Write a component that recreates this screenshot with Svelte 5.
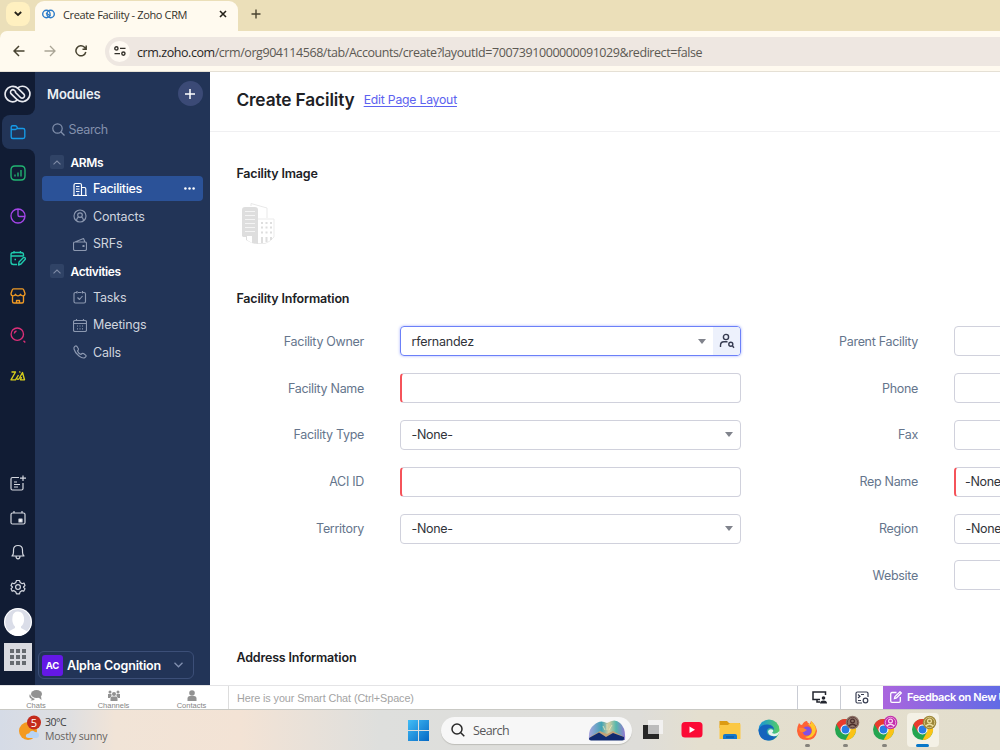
<script lang="ts">
  type Field = { label: string; value?: string; kind?: 'owner' | 'select'; required?: boolean };

  const leftFields: Field[] = [
    { label: 'Facility Owner', value: 'rfernandez', kind: 'owner' },
    { label: 'Facility Name', required: true },
    { label: 'Facility Type', value: '-None-', kind: 'select' },
    { label: 'ACI ID', required: true },
    { label: 'Territory', value: '-None-', kind: 'select' }
  ];

  const rightFields: Field[] = [
    { label: 'Parent Facility' },
    { label: 'Phone' },
    { label: 'Fax' },
    { label: 'Rep Name', value: '-None-', kind: 'select', required: true },
    { label: 'Region', value: '-None-', kind: 'select' },
    { label: 'Website' }
  ];

  const rail = [
    { name: 'Workspace', color: '#169be8', d: 'M1.2 13V3Q1.2 1.7 2.7 1.7H5.5Q6.5 1.7 7 3L7.5 4.5H13Q14.8 4.5 14.8 6.2V12.8Q14.8 14.5 13 14.5H2.8Q1.2 14.5 1.2 13ZM1.2 5.5H5.5L7.5 4.3' },
    { name: 'Reports', color: '#22b573', d: 'M5 1H11Q15 1 15 5V11Q15 15 11 15H5Q1 15 1 11V5Q1 1 5 1ZM5 11.5V9.5M8 11.5V7.5M11 11.5V5' },
    { name: 'Analytics', color: '#a445e8', d: 'M8 1A7 7 0 1 1 8 15A7 7 0 1 1 8 1M8 1V7Q8 8.5 9.5 8.5H15' },
    { name: 'Requests', color: '#1fcbae', d: 'M7 14.5H3.5Q1 14.5 1 12V4.5Q1 2.5 3.5 2.5H11Q13.5 2.5 13.5 4.5V6M1 6H13.5M4 1V3.5M10.5 1V3.5M4.5 9.5H6M8.5 15L9 12L13.5 7.5Q15 7 15.5 9L11 14Z' },
    { name: 'Marketplace', color: '#f09a24', d: 'M3.5 0.8H12.5Q13.5 0.8 13.8 2L15 5.5Q15 7.8 13 7.8Q11.5 7.8 10.5 6.3Q9.5 7.8 8 7.8T5.5 6.3Q4.5 7.8 3 7.8Q1 7.8 1 5.5L2.2 2Q2.5 0.8 3.5 0.8ZM2.5 8V13.5Q2.5 15 4 15H12Q13.5 15 13.5 13.5V8M6.5 15V12.5H9.5V15' },
    { name: 'Explore', color: '#de2f78', d: 'M7.3 1A6.2 6.2 0 1 1 7.3 13.4A6.2 6.2 0 1 1 7.3 1M4.3 6.5Q4.5 4.5 6.5 4M13.5 13.7L15.3 15.5' },
    { name: 'Zia', color: '#d9cf1c', d: 'M1.5 4H5.5L1 11.8H5.5L8.5 7M7 10.5Q8 12.5 9.5 10L12.5 4.5L14.5 11.8H10.5L11.5 9M9.5 4.5L10.2 3.5' }
  ];

  const tools = [
    { name: 'Notes', d: 'M9 2.5H2.5Q1 2.5 1 4V13.5Q1 15 2.5 15H11.5Q13 15 13 13.5V8M4 7H7M4 9.5H10M4 12H8M13 0.5V6M10 3.2H16' },
    { name: 'Calendar', d: 'M2.5 3H13.5Q15 3 15 4.5V12.5Q15 14 13.5 14H2.5Q1 14 1 12.5V4.5Q1 3 2.5 3ZM4 1V3M12 1V3' },
    { name: 'Notifications', d: 'M2 12Q3.5 11 3.5 8V6Q3.5 1.5 8 1.5T12.5 6V8Q12.5 11 14 12ZM6 12Q6 14.8 8 14.8T10 12' },
    { name: 'Settings', d: 'M6.5 1.5H9.5L10.2 3.5L12.2 4.7L14 4L15 6.5L13.5 8L15 9.8L13.7 12.2L11.8 11.7L10 13L9.5 14.8H6.5L5.8 13L4 11.7L2.2 12.2L1 9.8L2.5 8L1 6.5L2.2 4L4 4.7L5.8 3.5ZM8 5.7A2.4 2.4 0 1 1 8 10.5A2.4 2.4 0 1 1 8 5.7' }
  ];

  const groups = [
    {
      title: 'ARMs',
      items: [
        { label: 'Facilities', active: true, d: 'M1 13V3.5Q1 1.5 2.5 1.5H7Q8.5 1.5 8.5 3V13M0 13.5H14M8.5 5.5H11.5Q12.8 5.5 12.8 7V13.5M3 4.5H6.5M3 7H6.5M3 9.5H6.5M5 13V11.5' },
        { label: 'Contacts', d: 'M7 1A6 6 0 1 1 7 13A6 6 0 1 1 7 1M7 3.8A2.3 2.3 0 1 1 7 8.4A2.3 2.3 0 1 1 7 3.8M3.7 11.5V10.5Q4 9 5.5 8M10.3 11.5V10.5Q10 9 8.5 8' },
        { label: 'SRFs', d: 'M2 5H12Q13.5 5 13.5 6.5V12Q13.5 13.5 12 13.5H2Q0.5 13.5 0.5 12V6.5Q0.5 5 2 5ZM2 5L10.5 1.5L12 5M10 8.5H11V9.5H10Z' }
      ]
    },
    {
      title: 'Activities',
      items: [
        { label: 'Tasks', d: 'M4 2.5H2.5Q1 2.5 1 4V11.5Q1 13 2.5 13H11Q12.5 13 12.5 11.5V4Q12.5 2.5 11 2.5H9.5M5 2.5H8.5M4 1V3.5M9.5 1V3.5M4.5 7.5L6.5 9.5L9.5 6' },
        { label: 'Meetings', d: 'M2 2.5H12Q13.5 2.5 13.5 4V12Q13.5 13.5 12 13.5H2Q0.5 13.5 0.5 12V4Q0.5 2.5 2 2.5ZM0.5 5.5H13.5M3.5 1V3M10.5 1V3M4 8H5M6.5 8H7.5M9 8H10M4 10.8H5M6.5 10.8H7.5M9 10.8H10' },
        { label: 'Calls', d: 'M1 2.5Q2.5 0 4 1.5L5.5 4Q5.5 5 4.5 6Q5.5 8.5 8 9.5Q9 8 10.5 8.5L12.5 10Q14 11 12 12.5Q10 14 6 11Q2 8 1 4Z' }
      ]
    }
  ];

  const chromes = [
    { badge: '#8f7468', skin: '#4b2d2b' },
    { badge: '#c32bab', skin: '#f7d5f0' },
    { badge: '#9c8638', skin: '#eee0a0' }
  ];
</script>

{#snippet field(f: Field)}
  <div class="field-row">
    <span class="label">{f.label}</span>
    <div class="input" class:required={f.required} class:focused={f.kind === 'owner'}>
      <span class="value">{f.value ?? ''}</span>
      {#if f.kind}<i class="caret"></i>{/if}
      {#if f.kind === 'owner'}
        <span class="lookup">
          <svg width="16" height="16" viewBox="0 0 16 16" fill="none" stroke="#363b50" stroke-width="1.4"><circle cx="7" cy="4" r="2.6" /><path d="M1.5 14V12.5Q1.5 8.8 5 8.8H8.5M13.5 13L15 14.8" /><circle cx="11.8" cy="11.3" r="2" /></svg>
        </span>
      {/if}
    </div>
  </div>
{/snippet}

<div class="screen">
  <div class="tabs">
    <div class="tab-search"><svg width="10" height="8" viewBox="0 0 10 8" fill="none" stroke="#25221a" stroke-width="1.8"><path d="M1.8 2L5 5L8.2 2" /></svg></div>
    <div class="tab">
      <svg width="13" height="10" viewBox="0 0 13 10" fill="none" stroke="#2b7bc9" stroke-width="1.4"><circle cx="4.4" cy="5" r="3.7" /><circle cx="8.6" cy="5" r="3.7" /><path d="M4 4L8.5 7" /></svg>
      <span class="tab-title">Create Facility - Zoho CRM</span>
      <svg width="8" height="8" viewBox="0 0 8 8" stroke="#25221a" stroke-width="1.6"><path d="M1 1L7 7M7 1L1 7" /></svg>
    </div>
    <svg class="new-tab" width="10" height="10" viewBox="0 0 10 10" stroke="#4a4430" stroke-width="1.4"><path d="M5 0.5V9.5M0.5 5H9.5" /></svg>
  </div>
  <div class="toolbar">
    <svg width="12" height="12" viewBox="0 0 12 12" fill="none" stroke="#484331" stroke-width="1.5"><path d="M11.5 6H1.5M6 1L1 6L6 11" /></svg>
    <svg width="12" height="12" viewBox="0 0 12 12" fill="none" stroke="#aaa596" stroke-width="1.3"><path d="M0.5 6H10.5M6 1L11 6L6 11" /></svg>
    <svg width="12" height="12" viewBox="0 0 12 12" fill="none" stroke="#484331" stroke-width="1.5"><path d="M10.8 7A5 5 0 1 1 9.5 2.3L11 4M11.2 0.5V4.2H7.5" /></svg>
    <div class="address">
      <span class="site"><svg width="12" height="10" viewBox="0 0 12 10" fill="none" stroke="#33302a" stroke-width="1.4"><circle cx="2.4" cy="2.4" r="1.6" /><path d="M6 2.4H11.5M0.5 7.6H6" /><circle cx="9.4" cy="7.6" r="1.6" /></svg></span>
      <span class="url">crm.zoho.com<span>/crm/org904114568/tab/Accounts/create?layoutId=7007391000000091029&amp;redirect=false</span></span>
    </div>
  </div>

  <div class="app">
    <nav class="rail">
      <div class="logo">
        <svg width="27" height="18" viewBox="0 0 27 18" fill="none" stroke="#e8eaf0" stroke-width="1.65" stroke-linecap="round"><path d="M12.8 15.3C11.600 16.300 10.200 16.800 8.700 16.800A7.700 7.700 0 1 1 14.200 3.600L19.800 9.200A2.300 2.300 0 0 1 16.500 12.500L11.500 7.500" /><path d="M14.200 2.700C15.400 1.700 16.800 1.200 18.300 1.200A7.700 7.700 0 1 1 12.800 14.400L7.200 8.800A2.300 2.300 0 0 1 10.500 5.500L11.500 6.500" /></svg>
      </div>
      {#each rail as item, i}
        <div class="rail-item" class:current={i === 0}>
          <svg aria-label={item.name} width="16" height="16" viewBox="0 0 16 16" fill="none" stroke={item.color} stroke-width="1.35" stroke-linejoin="round"><path d={item.d} /></svg>
        </div>
      {/each}
      <div class="spacer"></div>
      {#each tools as tool}
        <div class="rail-item">
          <svg aria-label={tool.name} width="16" height="16" viewBox="0 0 16 16" fill="none" stroke="#d5d8e0" stroke-width="1.2" stroke-linejoin="round"><path d={tool.d} />{#if tool.name === 'Calendar'}<path d="M9 9H12V12H9Z" fill="#fff" />{/if}</svg>
        </div>
      {/each}
      <div class="rail-item">
        <svg width="28" height="28" viewBox="0 0 28 28"><circle cx="14" cy="14" r="14" fill="#dadde8" /><path d="M8.5 9Q9 3.5 14 3.5T20 9.5Q20.5 16 17 18.5V20L23.5 23.5Q19 28 14 28T4.5 23.5L11 20V18.5Q7.5 15 8.5 9Z" fill="#fff" /><circle cx="14" cy="14" r="13.4" fill="none" stroke="#fff" /></svg>
      </div>
      <div class="rail-item apps-item">
        <div class="launcher">{#each Array(9) as _}<i></i>{/each}</div>
      </div>
    </nav>

    <aside class="modules">
      <div class="modules-head">
        <span>Modules</span>
        <div class="add"><svg width="10" height="10" viewBox="0 0 10 10" stroke="#fff" stroke-width="1.5"><path d="M5 0V10M0 5H10" /></svg></div>
      </div>
      <div class="module-search">
        <svg width="13" height="13" viewBox="0 0 13 13" fill="none" stroke="#8290ac" stroke-width="1.2"><circle cx="5.5" cy="5.5" r="4.7" /><path d="M9 9L12.5 12.5" /></svg>
        Search
      </div>
      {#each groups as group}
        <div class="group">
          <i><svg width="8" height="5" viewBox="0 0 8 5" fill="none" stroke="#7f8ba6" stroke-width="1.1"><path d="M0.5 4.3L4 1L7.5 4.3" /></svg></i>
          {group.title}
        </div>
        {#each group.items as item}
          <div class="module" class:active={item.active}>
            <svg width="14" height="14" viewBox="0 0 14 14" fill="none" stroke="currentColor" stroke-width="1.15" stroke-linejoin="round"><path d={item.d} /></svg>
            <span>{item.label}</span>
            {#if item.active}<svg width="11" height="3" viewBox="0 0 11 3" fill="#fff"><circle cx="1.4" cy="1.5" r="1.25" /><circle cx="5.5" cy="1.5" r="1.25" /><circle cx="9.6" cy="1.5" r="1.25" /></svg>{/if}
          </div>
        {/each}
      {/each}
      <div class="org">
        <b>AC</b>
        <span>Alpha Cognition</span>
        <svg width="9" height="6" viewBox="0 0 9 6" fill="none" stroke="#8290b0" stroke-width="1.3"><path d="M0.5 0.8L4.5 4.8L8.5 0.8" /></svg>
      </div>
    </aside>

    <main>
      <header>
        <h1>Create Facility</h1>
        <a href="#layout">Edit Page Layout</a>
      </header>
      <h2 class="image-title">Facility Image</h2>
      <svg class="building" width="36" height="44" viewBox="0 0 36 44">
        <path d="M11 4V1.5L27 6V16" fill="none" stroke="#e9e9e9" />
        <path d="M2 8Q2 5 5 5H15Q18 5 18 8V42Q12 42 6 38V35H3L2 34Z" fill="#dedede" />
        <path d="M5 9.5H15M5 13.5H15M5 17.5H15M5 21.5H15M5 25.5H15M5 29.5H15" stroke="#f4f4f4" />
        <path d="M7 34H12V41L7 38Z" fill="#fff" />
        <path d="M18 17H34V35Q30 40 25 41.5H18" fill="#fff" stroke="#ebebeb" />
        <path d="M21 21H23M25.5 21H27.5M30 21H32M21 25.5H23M25.5 25.5H27.5M30 25.5H32M21 30.5H23M25.5 30.5H27.5M30 30.5H32" stroke="#dedede" stroke-width="2" />
        <path d="M22 35V41M26.5 35V40M31 35V38" stroke="#dedede" stroke-width="2" />
      </svg>
      <h2 class="info-title">Facility Information</h2>
      <div class="form">
        <div>{#each leftFields as f}{@render field(f)}{/each}</div>
        <div>{#each rightFields as f}{@render field(f)}{/each}</div>
      </div>
      <h2 class="address-title">Address Information</h2>
    </main>
  </div>

  <div class="chatbar">
    <div class="chat-tab chats"><svg width="14" height="11" viewBox="0 0 14 11" fill="#929292"><ellipse cx="7.5" cy="4" rx="5.5" ry="4" /><path d="M1 4Q-1 8 3 9L1.5 10.5Q5 10.5 6 9Q2 8 1 4ZM9 7L12.5 10L12 6Z" /></svg>Chats</div>
    <div class="chat-tab channels"><svg width="12" height="11" viewBox="0 0 12 11" fill="#929292"><circle cx="2" cy="2" r="1.5" /><circle cx="10" cy="2" r="1.5" /><circle cx="6" cy="4" r="2" /><path d="M0 4H3.5V6L2 8H0ZM12 4H8.5V6L10 8H12ZM2.5 11V8.5Q2.5 6.5 4.5 6.5H7.5Q9.5 6.5 9.5 8.5V11Z" /></svg>Channels</div>
    <div class="chat-tab people"><svg width="10" height="11" viewBox="0 0 10 11" fill="#929292"><circle cx="5" cy="3" r="2.8" /><path d="M0.5 11V8.5Q0.5 6 3 6H7Q9.5 6 9.5 8.5V11Z" /></svg>Contacts</div>
    <div class="smart-chat">Here is your Smart Chat (Ctrl+Space)</div>
    <div class="chat-tool"><svg width="15" height="13" viewBox="0 0 15 13" fill="none" stroke="#22252e" stroke-width="1.5"><path d="M8 8.5H1V1H13.5V4M5 8.5V11H8" /><circle cx="11.5" cy="7" r="1.8" fill="#22252e" stroke="none" /><path d="M8 12.5Q8 9.5 11.5 9.5T15 12.5Z" fill="#22252e" stroke="none" /></svg></div>
    <div class="chat-tool"><svg width="14" height="13" viewBox="0 0 14 13" fill="none" stroke="#363c50" stroke-width="1.2"><path d="M7 12H2.5Q1 12 1 10.5V2.5Q1 1 2.5 1H11.5Q13 1 13 2.5V6M3 3.5L5 5.2L3 7M6 3.5H9M3 9.5H6" /><circle cx="10.5" cy="9.5" r="2.3" /></svg></div>
    <div class="feedback"><svg width="12" height="12" viewBox="0 0 12 12" fill="none" stroke="#fff" stroke-width="1.3"><path d="M6.5 1.5H2Q0.7 1.5 0.7 3V10Q0.7 11.3 2 11.3H9Q10.3 11.3 10.3 10V6M4.5 7.5L5 5.5L10 0.8L11.3 2L6.5 7Z" /></svg>Feedback on New UI</div>
  </div>

  <div class="taskbar">
    <div class="weather">
      <svg width="22" height="26" viewBox="0 0 22 26"><circle cx="9" cy="16" r="9" fill="#f49a20" /><path d="M10 23Q6 23 7 20Q8 18 10 18.5Q12 14 16 17Q20 17 20 20Q20 23 17 23Z" fill="#b8d4f5" /><circle cx="15" cy="7.5" r="7" fill="#c42b1c" /><text x="15" y="11.5" text-anchor="middle" font-size="11" fill="#fff">5</text></svg>
      <div><span class="temp">30°C</span><span>Mostly sunny</span></div>
    </div>
    <svg width="21" height="21" viewBox="0 0 21 21"><defs><linearGradient id="win" x2="1" y2="1"><stop stop-color="#41bdf6" /><stop offset="1" stop-color="#0668c4" /></linearGradient></defs><path d="M0 0H10V10H0ZM11 0H21V10H11ZM0 11H10V21H0ZM11 11H21V21H11Z" fill="url(#win)" /></svg>
    <div class="task-search">
      <svg width="14" height="14" viewBox="0 0 14 14" fill="none" stroke="#292929" stroke-width="1.5"><circle cx="6" cy="6" r="5" /><path d="M9.8 9.8L13.3 13.3" /></svg>
      <span>Search</span>
      <svg width="38" height="22" viewBox="0 0 38 22">
        <defs>
          <linearGradient id="sky"><stop stop-color="#a9a3df" /><stop offset=".35" stop-color="#42a4b4" /><stop offset=".55" stop-color="#d9cda0" /><stop offset=".75" stop-color="#56b8ac" /><stop offset="1" stop-color="#9276d1" /></linearGradient>
        </defs>
        <path d="M1 21Q0 10 6 6Q12 0 19 4Q27 -1 32 4Q38 9 37 21Z" fill="url(#sky)" />
        <path d="M2 18L12 12L19 15L25 12L36 18V20Q36 21 34 21H4Z" fill="#c2a277" />
        <path d="M1 19L11 13.5L18 18L25 14L36 18V20Q36 21.5 34 21.5H3Q1 21.5 1 19Z" fill="#102a70" />
        <path d="M19 11V5M21 11L24 6M17 11L15 7" stroke="#f8ecc0" stroke-width=".7" />
      </svg>
    </div>
    <div class="apps">
      <svg width="22" height="22" viewBox="0 0 22 22"><path d="M1 6H17V20H1Z" fill="#262626" /><path d="M6 1H21V15H6Z" fill="#f4f4f4" opacity=".88" /><path d="M6 6H17V15H6Z" fill="#bcbcbc" /></svg>
      <svg width="22" height="22" viewBox="0 0 22 22"><rect x="0.5" y="3" width="21" height="15.5" rx="3.5" fill="#fb0a35" /><path d="M8.5 7.5V14L14 10.8Z" fill="#fff" /></svg>
      <svg width="22" height="22" viewBox="0 0 22 22"><path d="M0.5 2H8L10 4H21V9H0.5Z" fill="#dc9b13" /><path d="M0.5 6H9L11 4H20Q21.5 4 21.5 6V20H0.5Z" fill="#fbc844" /><path d="M4 20V17Q4 15 6 15H16Q18 15 18 17V20Z" fill="#1478ca" /><path d="M7 18H15" stroke="#0b4d91" /></svg>
      <svg width="22" height="22" viewBox="0 0 22 22"><defs><linearGradient id="edge"><stop stop-color="#1592dd" /><stop offset="1" stop-color="#55ce64" /></linearGradient></defs><circle cx="11" cy="11" r="10.5" fill="url(#edge)" /><path d="M0.5 11Q3 5 10 5.5Q16 6 16 11Q15 9 12 9Q8 10 9 14Q11 18 19 17Q15 22 10 21.5Q1 21 0.5 11Z" fill="#1464bd" /><path d="M10 12Q12 9 15 11Q16 12 14 14Q18 16 21.5 12Q21 16 18 17Q10 18 10 12Z" fill="#e6f3ef" /></svg>
      <div class="running"><svg width="22" height="22" viewBox="0 0 22 22"><path d="M3 4Q4 6 6 6Q8 2 11 2Q11 4 14 5L15 2Q20 6 21 12Q20 21 11 21T1 12Q1 8 3 4Z" fill="#ff6335" /><path d="M15 2Q22 8 19 14Q15 21 9 18Q16 17 16 11Q15 7 12 5L15 5Z" fill="#ffc62b" /><circle cx="11" cy="12" r="4.5" fill="#8150e4" /><path d="M3 9Q7 8 11 11Q9 12 8 13Q3 14 3 9Z" fill="#ff8630" /></svg></div>
      {#each chromes as c, i}
        <div class="running" class:open={i === 2}>
          <svg class="chrome" width="26" height="26" viewBox="0 0 26 26">
            <circle cx="11.5" cy="14.5" r="10.5" fill="#24a550" />
            <path d="M2.4 9.25A10.5 10.5 0 0 1 20.6 9.25H11.5L7 17Z" fill="#e93b2d" />
            <path d="M20.6 9.25A10.5 10.5 0 0 1 11.5 25L16 17L11.5 9.25Z" fill="#fbc316" />
            <circle cx="11.5" cy="14.5" r="5" fill="#fff" /><circle cx="11.5" cy="14.5" r="3.9" fill="#287be6" />
            <circle cx="18.5" cy="7.5" r="6.8" fill={c.badge} /><circle cx="18.5" cy="7.5" r="5.2" fill="none" stroke={c.skin} opacity=".65" />
            <circle cx="18.5" cy="6" r="1.9" fill="none" stroke={c.skin} stroke-width="1.2" /><path d="M14.8 11Q18.5 7.5 22.2 11" fill="none" stroke={c.skin} stroke-width="1.3" />
          </svg>
        </div>
      {/each}
    </div>
  </div>
</div>

<style>
  :global(body) {
    overflow: hidden;
  }

  .screen {
    display: flex;
    flex-direction: column;
    width: 1000px;
    height: 750px;
    overflow: hidden;
    background: #ebdfb9;
    font-family: Inter, sans-serif;
    font-size: 13px;
    white-space: nowrap;
  }

  .screen :global(*) {
    box-sizing: border-box;
  }

  svg {
    display: block;
    flex: none;
  }

  .tabs {
    display: flex;
    align-items: center;
    height: 31px;
    padding-left: 6px;
    flex: none;
  }

  .tab-search {
    display: grid;
    place-items: center;
    width: 24px;
    height: 24px;
    margin: 0 5px 3px 0;
    border-radius: 8px;
    background: #fff0c0;
  }

  .tab {
    display: flex;
    align-items: center;
    align-self: flex-end;
    width: 203px;
    height: 30px;
    padding: 0 11px 4px 7px;
    border-radius: 9px 9px 0 0;
    background: #fffaef;
  }

  .tab-title {
    flex: 1;
    margin-left: 8px;
    font: 11px 'Open Sans', sans-serif;
    letter-spacing: -0.36px;
    color: #35322b;
  }

  .new-tab {
    margin: 0 0 3px 13px;
  }

  .toolbar {
    display: flex;
    align-items: center;
    gap: 19px;
    height: 41px;
    padding: 0 0 0 13px;
    flex: none;
    background: #fffaef;
    border-radius: 7px 0 0 0;
    border-bottom: 1px solid #e5e0d5;
  }

  .address {
    display: flex;
    align-items: center;
    flex: 1;
    height: 29px;
    margin-left: -1px;
    padding-left: 4px;
    border-radius: 15px 0 0 15px;
    background: #eee7e1;
  }

  .site {
    display: grid;
    place-items: center;
    width: 21px;
    height: 21px;
    border-radius: 50%;
    background: #fffaf3;
  }

  .url {
    margin: 2px 0 0 7px;
    font: 12.5px 'Open Sans', sans-serif;
    letter-spacing: -0.435px;
    color: #28251f;
  }

  .url span {
    color: #5c5953;
  }

  .app {
    display: flex;
    height: 613px;
    flex: none;
  }

  /* module colour shows through behind the rounded right-hand corners */
  .rail {
    display: grid;
    grid-template-rows: 43px 34px 48px 38px 46px 30px 48px 34px 1fr 34px 36px 32px 38px 32px 47px;
    width: 35px;
    background: linear-gradient(90deg, #111c34 24px, #223457 24px);
  }

  .logo {
    display: flex;
    align-items: center;
    padding-left: 4px;
    background: #111c34;
    border-bottom-right-radius: 8px;
  }

  .spacer {
    background: #111c34;
  }

  .rail-item {
    display: flex;
    align-items: center;
    justify-content: center;
    background: #111c34;
  }

  .rail-item.current {
    margin-left: 2px;
    padding-right: 2px;
    border-radius: 8px 0 0 8px;
    background: #223457;
  }

  .current + .rail-item {
    border-top-right-radius: 8px;
  }

  .apps-item {
    padding-bottom: 9px;
  }

  .launcher {
    display: grid;
    grid-template-columns: repeat(3, 4px);
    gap: 2px;
    place-content: center;
    width: 28px;
    height: 28px;
    background: #d9dae0;
  }

  .launcher i {
    height: 4px;
    background: #666a70;
  }

  .modules {
    display: flex;
    flex-direction: column;
    width: 175px;
    padding: 0 7.5px 6px 7px;
    background: #223457;
    color: #d0d5df;
  }

  .modules-head {
    display: flex;
    justify-content: space-between;
    align-items: center;
    height: 43px;
    padding-left: 5px;
    font-size: 13px;
    font-weight: 600;
    letter-spacing: -0.1px;
    color: #edf0f5;
  }

  .add {
    display: grid;
    place-items: center;
    width: 25px;
    height: 25px;
    border-radius: 50%;
    background: #3b4a76;
  }

  .module-search {
    display: flex;
    align-items: center;
    gap: 4px;
    height: 29px;
    margin-bottom: 1px;
    padding-left: 9.5px;
    font-size: 12.5px;
    letter-spacing: -0.35px;
    color: #8290ac;
  }

  .group {
    display: flex;
    align-items: center;
    gap: 6.5px;
    height: 26.4px;
    padding: 1px 0 0 8px;
    font-size: 12px;
    font-weight: 600;
    letter-spacing: -0.4px;
    color: #fff;
  }

  .module-search + .group {
    height: 31px;
    padding-top: 3px;
  }

  .group i {
    display: grid;
    place-items: center;
    width: 14px;
    height: 14px;
    border-radius: 2px;
    background: #304366;
  }

  .module {
    display: flex;
    align-items: center;
    height: 27.4px;
    padding: 0 8px 0 30.5px;
    font-size: 12.5px;
    letter-spacing: -0.15px;
  }

  .module span {
    flex: 1;
    margin-left: 6.5px;
  }

  .module svg:first-child {
    color: #8c98b0;
  }

  .module.active {
    height: 25px;
    margin-bottom: 1.6px;
    border-radius: 4px;
    background: #2b5298;
    color: #fff;
    font-weight: 500;
    letter-spacing: -0.35px;
  }

  .module.active svg:first-child {
    color: #fff;
  }

  .org {
    display: flex;
    align-items: center;
    width: 156px;
    height: 28px;
    margin: auto 0 0 -4px;
    padding: 0 10px 0 3px;
    border: 1px solid #3c4f78;
    border-radius: 6px;
    color: #fff;
  }

  .org b {
    display: grid;
    place-items: center;
    width: 21px;
    height: 21px;
    border-radius: 3px;
    background: #6418e6;
    font-size: 9.5px;
  }

  .org span {
    flex: 1;
    margin-left: 4px;
    font-size: 12.5px;
    font-weight: 600;
    letter-spacing: -0.18px;
  }

  main {
    flex: 1;
    min-width: 0;
    background: #fff;
    color: #202125;
  }

  header {
    display: flex;
    align-items: center;
    gap: 9px;
    height: 60px;
    padding: 0 0 4px 26.4px;
    border-bottom: 1px solid #f0f0f2;
  }

  h1 {
    margin: 0;
    font-size: 17.3px;
    font-weight: 600;
    letter-spacing: -0.12px;
  }

  a {
    font-size: 12.2px;
    letter-spacing: -0.2px;
    color: #5c62f0;
    text-underline-offset: 2px;
  }

  h2 {
    margin: 0 0 0 26.4px;
    font-size: 12.5px;
    font-weight: 600;
    line-height: 16px;
    letter-spacing: -0.17px;
  }

  .image-title {
    margin-top: 34px;
  }

  .building {
    margin: 20px 0 0 29.5px;
  }

  .info-title {
    margin-top: 44.5px;
  }

  .form {
    display: grid;
    grid-template-columns: 531px 554px;
    column-gap: 23px;
    padding-top: 20.4px;
  }

  .field-row {
    display: flex;
    align-items: center;
    height: 29px;
    margin-bottom: 17.8px;
  }

  .label {
    width: 154px;
    text-align: right;
    font-size: 12.5px;
    letter-spacing: -0.3px;
    color: #65758c;
  }

  .input {
    display: flex;
    align-items: center;
    width: 341px;
    height: 30px;
    flex: none;
    margin-left: 36px;
    padding-left: 10.5px;
    border: 1px solid #d0d1dc;
    border-radius: 4px;
    font-size: 12.5px;
    letter-spacing: -0.3px;
    color: #31343a;
  }

  .input.required {
    border-left: 2px solid #f5535a;
    padding-left: 9px;
  }

  .input.focused {
    border-color: #6c80f8;
    box-shadow: 0 0 3px #a4afff;
    letter-spacing: -0.25px;
  }

  .value {
    flex: 1;
  }

  .caret {
    margin-right: 7px;
    border: 4.5px solid transparent;
    border-top: 5px solid #80838c;
    border-bottom: 0;
  }

  .lookup {
    display: grid;
    place-items: center;
    width: 27px;
    height: 28px;
    border-radius: 0 3px 3px 0;
    background: #edf1fc;
  }

  .address-title {
    margin-top: 42.4px;
  }

  .chatbar {
    display: flex;
    height: 25px;
    flex: none;
    border-top: 1px solid #e4e4e6;
    border-bottom: 1px solid #c9c9c4;
    background: #fff;
  }

  .chat-tab {
    display: flex;
    flex-direction: column;
    align-items: center;
    padding-top: 4px;
    font: 7.5px/9px 'Liberation Sans', sans-serif;
    color: #858585;
  }

  .chats {
    width: 72px;
  }

  .channels {
    width: 83px;
  }

  .people {
    width: 73px;
  }

  .smart-chat {
    flex: 1;
    padding-left: 8px;
    border-left: 1px solid #ddd;
    font: 10.8px/24px 'Liberation Sans', sans-serif;
    letter-spacing: -0.08px;
    color: #a3a3a3;
  }

  .chat-tool {
    display: grid;
    place-items: center;
    width: 43px;
    border-left: 1px solid #c9ccd4;
  }

  .feedback {
    display: flex;
    align-items: center;
    gap: 5px;
    width: 117px;
    padding: 0 0 2px 7px;
    overflow: hidden;
    background: linear-gradient(90deg, #aa65de, #616be5);
    color: #fff;
    font-size: 11px;
    font-weight: 600;
    letter-spacing: -0.38px;
  }

  .taskbar {
    display: flex;
    align-items: center;
    height: 40px;
    flex: none;
    background: linear-gradient(90deg, #d5dbe6 0, #dfdfe1 70px, #f1e4d7 115px, #f3e3d5 240px, #dedfdd 380px, #deddd9 640px, #e4dfcf 700px, #e3decd);
    font-family: 'Open Sans', sans-serif;
  }

  .weather {
    display: flex;
    gap: 4px;
    width: 408px;
    padding: 0 0 2px 19px;
  }

  .weather div {
    display: flex;
    flex-direction: column;
    font-size: 10.5px;
    line-height: 14px;
    letter-spacing: -0.2px;
    color: #65625f;
  }

  .weather .temp {
    color: #3c3c3d;
    letter-spacing: -0.5px;
  }

  .task-search {
    display: flex;
    align-items: center;
    width: 191px;
    height: 27px;
    margin-left: 12px;
    padding: 0 6px 0 10px;
    border-radius: 14px;
    background: #f7f7f7;
    box-shadow: 0 1px 1px #bdbdb8;
    font-size: 12.5px;
    letter-spacing: -0.6px;
    color: #57575a;
  }

  .task-search span {
    flex: 1;
    margin-left: 8px;
  }

  .apps {
    display: grid;
    grid-template-columns: repeat(8, 38.5px);
    place-items: center;
    margin-left: 2px;
  }

  .running {
    position: relative;
    display: grid;
    place-items: center;
    width: 32px;
    height: 34px;
    border-radius: 4px;
  }

  .chrome {
    margin: 0 0 5px 2px;
  }

  .running::after {
    position: absolute;
    bottom: 0;
    width: 5px;
    height: 3px;
    border-radius: 2px;
    background: #85837c;
    content: '';
  }

  .open {
    background: #f4f1e6;
  }

  .open::after {
    width: 13px;
    background: #0877c9;
  }
</style>
